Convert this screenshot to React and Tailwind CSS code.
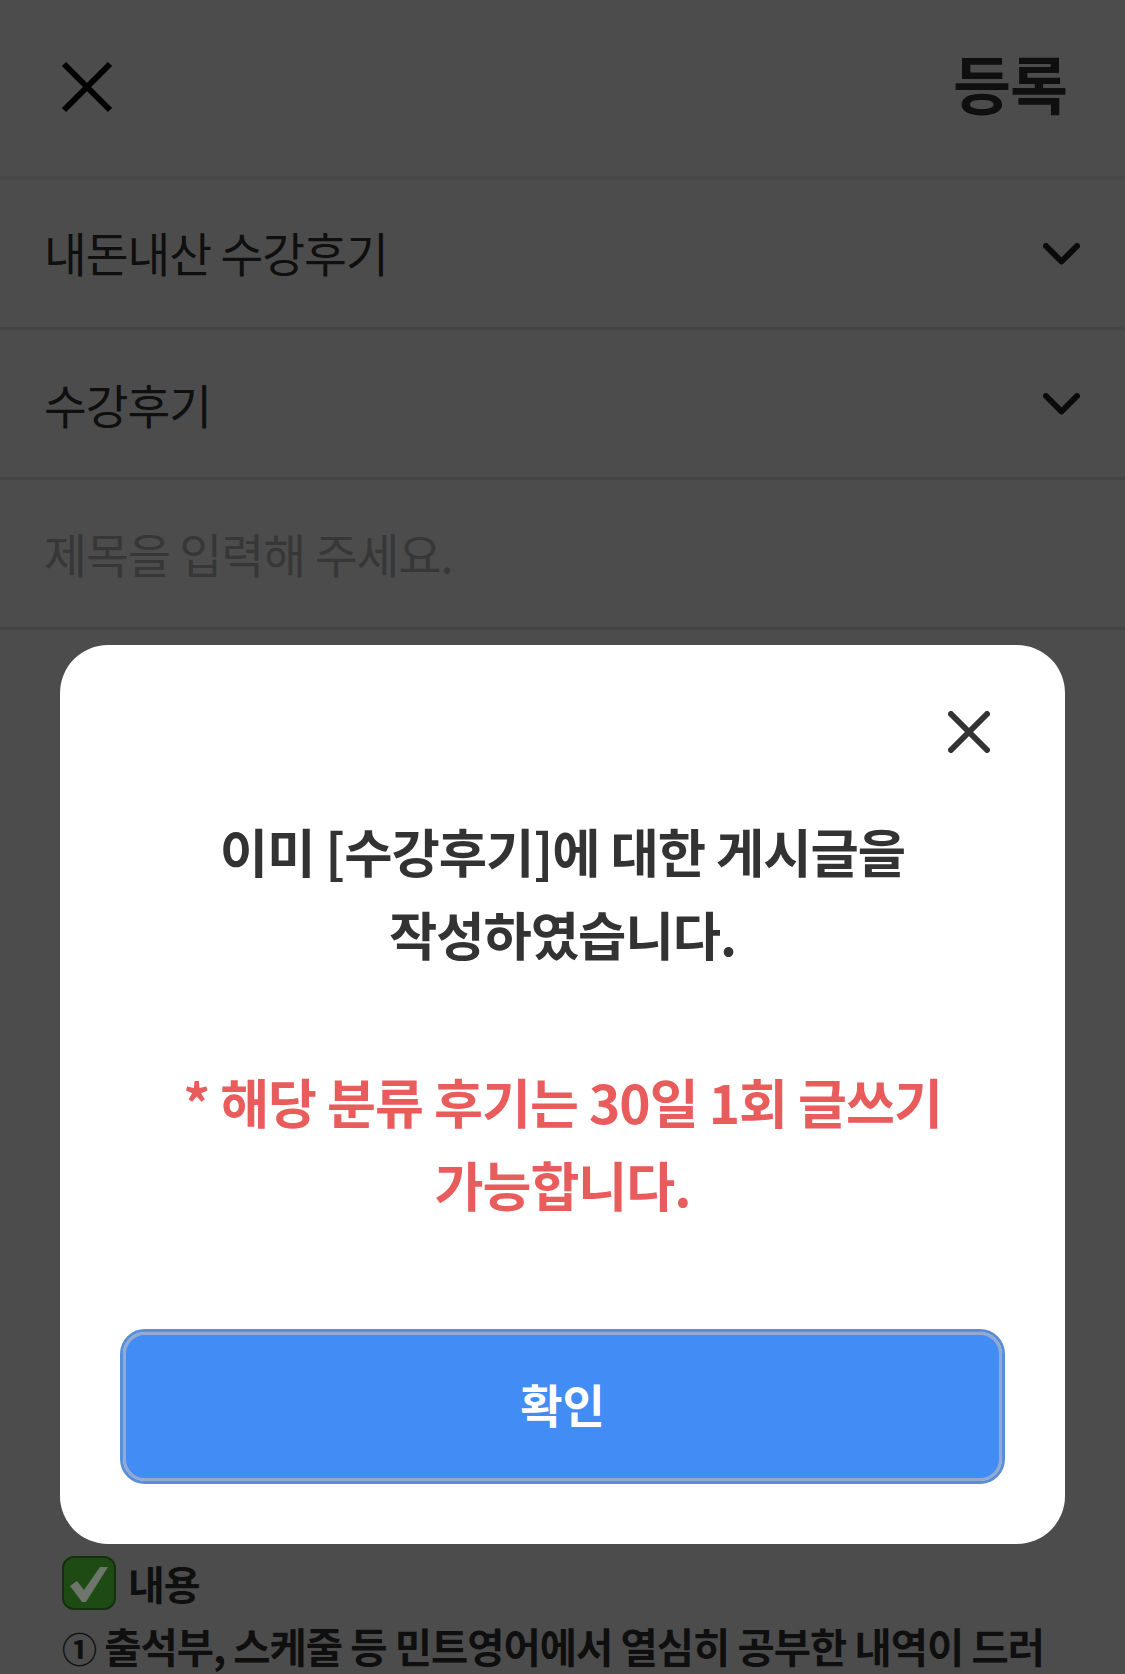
const fontStack = { fontFamily: '"Noto Sans CJK KR", "Noto Sans", sans-serif' };

const Chevron = () => (
  <svg width="37" height="22" viewBox="0 0 37 22" fill="none" stroke="#222" strokeWidth="6" strokeLinecap="round" strokeLinejoin="round">
    <path d="M3 3 L18.5 18.5 L34 3" />
  </svg>
);

const SelectRow = ({ label, className }) => (
  <div className="flex items-center justify-between h-[150px] pl-[44px] pr-[45px] border-b-[3px] border-[#e6e6e6]">
    <span className={`text-[46.5px] tracking-[-1px] text-[#333] ${className}`}>{label}</span>
    <Chevron />
  </div>
);

export default function App() {
  return (
    <div className="relative w-[1125px] h-[1674px] overflow-hidden bg-white" style={fontStack}>
      {/* page behind the dialog */}
      <header className="flex items-center justify-between h-[180px] pl-[60px] pr-[58px] pb-[2px] border-b-[4px] border-[#f1f1f1]">
        <svg width="54" height="54" viewBox="0 0 54 54" fill="none" stroke="#000" strokeWidth="6">
          <path d="M4 4 L50 50 M50 4 L4 50" />
        </svg>
        <span className="mb-[10px] text-[63px] font-bold tracking-[-1px] text-[#333]">등록</span>
      </header>
      <SelectRow label="내돈내산 수강후기" className="mb-[3px]" />
      <SelectRow label="수강후기" className="" />
      <div className="flex items-center h-[150px] pl-[44px] border-b-[3px] border-[#e6e6e6]">
        <span className="text-[46.7px] tracking-[-1px] text-[#b8b8b8]">제목을 입력해 주세요.</span>
      </div>
      <div className="pt-[924px] pl-[62px] text-[#333] font-bold text-[40px] tracking-[-1px]">
        <div className="flex items-center gap-[12px] h-[58px]">
          <svg className="relative z-10" width="54" height="54" viewBox="0 0 54 54">
            <rect x="1" y="1" width="52" height="52" rx="11" fill="#1e4a14" stroke="#14300e" strokeWidth="2" />
            <path d="M8 30 L15 25 L22 34 L38 11 L46 11 L24 46 L20 46 Z" fill="#6e756b" />
          </svg>
          <span>내용</span>
        </div>
        <p className="mt-[4px] whitespace-nowrap text-[40.5px]">
          <span className="text-[35px]">①</span> 출석부, 스케줄 등 민트영어에서 열심히 공부한 내역이 드러
        </p>
      </div>

      {/* dimmed overlay + dialog */}
      <div className="absolute inset-0 bg-black/70">
        <div className="absolute left-[60px] top-[645px] w-[1005px] h-[899px] rounded-[48px] bg-white flex flex-col items-center px-[60px]">
          <button className="absolute right-[75px] top-[66px]">
            <svg width="42" height="42" viewBox="0 0 42 42" fill="none" stroke="#333" strokeWidth="6" strokeLinecap="round">
              <path d="M3 3 L39 39 M39 3 L3 39" />
            </svg>
          </button>
          <div className="mt-[164px] text-center text-[52.5px] leading-[83px] font-semibold tracking-[-1px] text-[#333]">
            <p>이미 [수강후기]에 대한 게시글을</p>
            <p>작성하였습니다.</p>
          </div>
          <div className="mt-[84px] text-center text-[53.2px] leading-[83px] font-bold tracking-[-1px] text-[#e85c5c]">
            <p>* 해당 분류 후기는 30일 1회 글쓰기</p>
            <p>가능합니다.</p>
          </div>
          <button className="mt-auto mb-[63px] w-[879px] h-[149px] pb-[6px] rounded-[22px] bg-[#428cf6] border-[3px] border-[#94a9cf] outline-[3px] outline-[#5a8ed8] text-white text-[46px] font-bold">
            확인
          </button>
        </div>
      </div>
    </div>
  );
}
